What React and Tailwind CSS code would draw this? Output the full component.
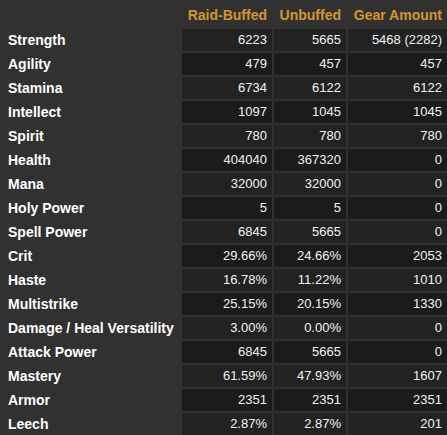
const rows = [
  ["Strength", "6223", "5665", "5468 (2282)"],
  ["Agility", "479", "457", "457"],
  ["Stamina", "6734", "6122", "6122"],
  ["Intellect", "1097", "1045", "1045"],
  ["Spirit", "780", "780", "780"],
  ["Health", "404040", "367320", "0"],
  ["Mana", "32000", "32000", "0"],
  ["Holy Power", "5", "5", "0"],
  ["Spell Power", "6845", "5665", "0"],
  ["Crit", "29.66%", "24.66%", "2053"],
  ["Haste", "16.78%", "11.22%", "1010"],
  ["Multistrike", "25.15%", "20.15%", "1330"],
  ["Damage / Heal Versatility", "3.00%", "0.00%", "0"],
  ["Attack Power", "6845", "5665", "0"],
  ["Mastery", "61.59%", "47.93%", "1607"],
  ["Armor", "2351", "2351", "2351"],
  ["Leech", "2.87%", "2.87%", "201"],
];

const headers = ["Raid-Buffed", "Unbuffed", "Gear Amount"];

export default function App() {
  return (
    <div
      className="w-[447px] h-[435px] bg-[#313131] overflow-hidden"
      style={{ fontFamily: '"Liberation Sans", Arial, sans-serif' }}
    >
      <div className="grid grid-cols-[180px_90px_72px_99px] auto-rows-[22px] grid-rows-[27px] gap-[2px]">
        <div />
        {headers.map((h) => (
          <div
            key={h}
            className="flex items-center justify-end pr-[5px] pt-[3px] text-[14px] font-bold text-[#d4952b] whitespace-nowrap"
          >
            {h}
          </div>
        ))}
        {rows.map(([label, ...vals], i) => {
          const bg = i % 2 === 0 ? "bg-[#222222]" : "bg-[#1b1b1b]";
          return [
            <div
              key={label}
              className="flex items-center pl-2 text-[14px] font-bold text-white whitespace-nowrap"
            >
              {label}
            </div>,
            ...vals.map((v, j) => (
              <div
                key={label + j}
                className={`${bg} flex items-center justify-end pr-[5px] text-[13px] text-[#f2f2f2] whitespace-nowrap`}
              >
                {v}
              </div>
            )),
          ];
        })}
      </div>
    </div>
  );
}
